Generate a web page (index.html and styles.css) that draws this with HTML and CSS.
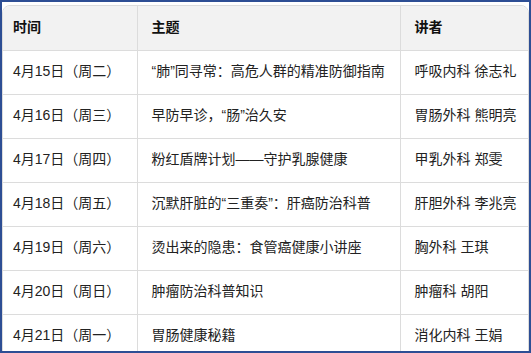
FILE: index.html
```html
<!DOCTYPE html>
<html lang="zh-CN">
<head>
<meta charset="utf-8">
<title>讲座安排</title>
<link rel="stylesheet" href="styles.css">
</head>
<body>
<div class="frame">
  <div class="table-wrap">
    <table class="schedule">
      <colgroup>
        <col class="c-time">
        <col class="c-topic">
        <col class="c-speaker">
      </colgroup>
      <thead>
        <tr><th class="first">时间</th><th>主题</th><th>讲者</th></tr>
      </thead>
      <tbody>
        <tr><td class="first">4月15日（周二）</td><td>“肺”同寻常：高危人群的精准防御指南</td><td>呼吸内科 徐志礼</td></tr>
        <tr><td class="first">4月16日（周三）</td><td>早防早诊，“肠”治久安</td><td>胃肠外科 熊明亮</td></tr>
        <tr><td class="first">4月17日（周四）</td><td>粉红盾牌计划——守护乳腺健康</td><td>甲乳外科 郑雯</td></tr>
        <tr><td class="first">4月18日（周五）</td><td>沉默肝脏的“三重奏”：肝癌防治科普</td><td>肝胆外科 李兆亮</td></tr>
        <tr><td class="first">4月19日（周六）</td><td>烫出来的隐患：食管癌健康小讲座</td><td>胸外科 王琪</td></tr>
        <tr><td class="first">4月20日（周日）</td><td>肿瘤防治科普知识</td><td>肿瘤科 胡阳</td></tr>
        <tr><td class="first">4月21日（周一）</td><td>胃肠健康秘籍</td><td>消化内科 王娟</td></tr>
      </tbody>
    </table>
  </div>
</div>
</body>
</html>
```

FILE: styles.css
```css
html, body {
  margin: 0;
  padding: 0;
  background: #ffffff;
}

.frame {
  box-sizing: border-box;
  width: 531px;
  height: 353px;
  border: 2px solid #2d4e94;
  padding-top: 3px;
  overflow: hidden;
  background: #ffffff;
}

.table-wrap {
  border: 1px solid #dcdcdc;
  border-radius: 8px;
  overflow: hidden;
}

.schedule {
  width: 100%;
  border-collapse: collapse;
  border-style: hidden;
  table-layout: fixed;
  font-family: "Liberation Sans", "Noto Sans CJK SC", sans-serif;
  font-size: 14px;
  color: #222222;
}

.c-time { width: 134px; }
.c-topic { width: 263px; }

.schedule th,
.schedule td {
  border: 1px solid #dcdcdc;
  height: 44px;
  padding: 0 8px 2px 14px;
  text-align: left;
  vertical-align: middle;
  white-space: nowrap;
  line-height: 20px;
  box-sizing: border-box;
}

.schedule th {
  background: #f2f2f2;
  font-weight: bold;
  color: #111111;
}

.schedule .first {
  padding-left: 10px;
}
```
